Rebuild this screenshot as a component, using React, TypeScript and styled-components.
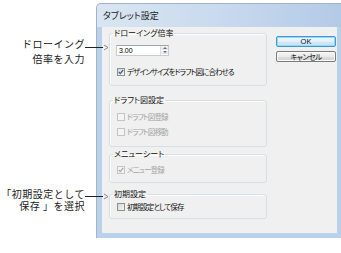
import React from 'react';
import styled, { createGlobalStyle } from 'styled-components';

const GlobalStyle = createGlobalStyle`
  html, body { margin: 0; padding: 0; background: #ffffff; }
  body { font-family: "Noto Sans CJK JP", "Noto Sans", sans-serif; }
  * { box-sizing: border-box; }
`;

const Page = styled.div`
  display: flex;
  width: 341px;
  height: 253px;
  overflow: hidden;
  background: #ffffff;
`;

const Side = styled.div`
  flex: 0 0 96px;
  position: relative;
  z-index: 2;
  padding-top: 36px;
  display: flex;
  flex-direction: column;
`;

const Annotation = styled.div<{ $mt: number }>`
  display: flex;
  justify-content: flex-end;
  align-items: flex-start;
  margin-top: ${(p) => p.$mt}px;
  margin-right: -13px;
  font-size: 10px;
  letter-spacing: 0.5px;
  color: #1a1a1a;
`;

const AnnText = styled.div<{ $gap: number }>`
  display: flex;
  flex-direction: column;
  align-items: flex-end;
  gap: ${(p) => p.$gap}px;
  white-space: nowrap;
`;

const AnnLine = styled.span`
  display: block;
  height: 11px;
  line-height: 11px;
`;

const ArrowSvg = styled.svg`
  flex: none;
  display: block;
`;

const Arrow = ({ y }: { y: number }) => (
  <ArrowSvg width="24" height="24" viewBox="0 0 24 24">
    <line x1="0" y1={y + 0.5} x2="18" y2={y + 0.5} stroke="#222" strokeWidth="1" />
    <polyline points={`19,${y - 2} 23,${y + 0.5} 19,${y + 3}`} fill="none" stroke="#8a8a8a" strokeWidth="1" />
  </ArrowSvg>
);

const Window = styled.div`
  flex: none;
  width: 245px;
  height: 235px;
  margin-top: 3px;
  border-top: 1px solid #a3b2c4;
  border-left: 1px solid #a3b2c4;
  border-top-left-radius: 5px;
  background: #b9d1ea;
  display: flex;
  flex-direction: column;
  padding: 0 4px 5px 5px;
`;

const TitleBar = styled.div`
  height: 23px;
  margin: 0 -4px 0 -5px;
  padding-left: 6px;
  display: flex;
  align-items: center;
  font-size: 9px;
  color: #1c1c1c;
  font-feature-settings: "palt";
  background: linear-gradient(to right, #d9e5f2 0%, #c9daee 50%, #b3cae6 100%);
  border-top-left-radius: 4px;
`;

const Client = styled.div`
  flex: 1;
  background: #f0f0f0;
  display: flex;
  gap: 9px;
  padding: 1px 0 0 7px;
`;

const GroupsColumn = styled.div`
  width: 158px;
  display: flex;
  flex-direction: column;
`;

const Group = styled.fieldset<{ $mt: number }>`
  margin: ${(p) => p.$mt}px 0 0 0;
  padding: 0;
  min-width: 0;
  border: 1px solid #d5dfe5;
  border-radius: 3px;
  box-shadow: inset 1px 1px 0 #ffffff;
`;

const Legend = styled.legend`
  margin-left: 3px;
  padding: 0 1px;
  font-size: 8px;
  line-height: 10px;
  color: #111;
  font-feature-settings: "palt";
`;

const GroupBody = styled.div<{ $pt: number; $pb: number; $gap: number }>`
  display: flex;
  flex-direction: column;
  gap: ${(p) => p.$gap}px;
  padding: ${(p) => p.$pt}px 0 ${(p) => p.$pb}px 6px;
`;

const SpinBox = styled.div`
  width: 53px;
  height: 11px;
  display: flex;
  border: 1px solid #c5ccd4;
  border-top-color: #9ea6b0;
  background: #ffffff;
`;

const SpinValue = styled.div`
  flex: 1;
  font-size: 7px;
  line-height: 9px;
  padding-left: 2px;
  color: #000;
  font-family: "Liberation Sans", sans-serif;
`;

const Spinner = styled.div`
  width: 8px;
  display: flex;
  flex-direction: column;
  border-left: 1px solid #d8dde3;
`;

const SpinHalf = styled.div`
  flex: 1;
  display: flex;
  align-items: center;
  justify-content: center;
  background: linear-gradient(#f6f6f6, #e2e2e2);
  border-bottom: 1px solid #ffffff;
`;

const Tri = styled.svg`
  display: block;
`;

const CheckRow = styled.div<{ $disabled?: boolean }>`
  height: 13px;
  display: flex;
  align-items: center;
  gap: 2px;
  padding-left: 1px;
  font-size: 7.5px;
  letter-spacing: -0.9px;
  line-height: 13px;
  color: ${(p) => (p.$disabled ? '#a4a4a4' : '#111')};
  font-feature-settings: "palt";
  white-space: nowrap;
`;

const Box = styled.div<{ $disabled?: boolean }>`
  width: 8px;
  height: 8px;
  flex: none;
  display: flex;
  align-items: center;
  justify-content: center;
  border: 1px solid ${(p) => (p.$disabled ? '#c4c4c4' : '#8e8f8f')};
  background: ${(p) => (p.$disabled ? '#f4f4f4' : 'linear-gradient(135deg, #d8d8d8, #f4f4f4)')};
`;

const Check = ({ color }: { color: string }) => (
  <svg width="6" height="6" viewBox="0 0 6 6">
    <polyline points="0.8,3 2.3,4.6 5.2,1" fill="none" stroke={color} strokeWidth="1.2" />
  </svg>
);

const CheckBox = ({ checked, disabled, label }: { checked?: boolean; disabled?: boolean; label: string }) => (
  <CheckRow $disabled={disabled}>
    <Box $disabled={disabled}>{checked && <Check color={disabled ? '#a8a8a8' : '#3e5a96'} />}</Box>
    <span>{label}</span>
  </CheckRow>
);

const ButtonsColumn = styled.div`
  width: 60px;
  display: flex;
  flex-direction: column;
  gap: 4px;
  padding-top: 8px;
`;

const Button = styled.div<{ $default?: boolean }>`
  height: 11px;
  display: flex;
  align-items: center;
  justify-content: center;
  font-size: 7.5px;
  line-height: 9px;
  color: #111;
  font-feature-settings: "palt";
  border-radius: 2px;
  border: 1px solid ${(p) => (p.$default ? '#3c9ad8' : '#7b7b7b')};
  background: ${(p) =>
    p.$default
      ? 'linear-gradient(#eef7fd 0%, #e1f1fb 50%, #cfe8f8 51%, #c4e3f7 100%)'
      : 'linear-gradient(#f4f4f4 0%, #ebebeb 50%, #dddddd 51%, #d2d2d2 100%)'};
  box-shadow: ${(p) => (p.$default ? 'inset 0 0 0 1px #9bd4f5' : 'inset 0 0 0 1px #f8f8f8')};
`;

const ButtonLabel = styled.span<{ $latin?: boolean }>`
  font-family: ${(p) => (p.$latin ? '"Liberation Sans", sans-serif' : 'inherit')};
  letter-spacing: ${(p) => (p.$latin ? '0' : '-0.5px')};
`;

export default function App() {
  return (
    <>
      <GlobalStyle />
      <Page>
        <Side>
          <Annotation $mt={2}>
            <AnnText $gap={4}>
              <AnnLine>ドローイング</AnnLine>
              <AnnLine>倍率を入力</AnnLine>
            </AnnText>
            <Arrow y={9} />
          </Annotation>
          <Annotation $mt={124}>
            <AnnText $gap={1}>
              <AnnLine>「初期設定として</AnnLine>
              <AnnLine>保存 」を選択</AnnLine>
            </AnnText>
            <Arrow y={8} />
          </Annotation>
        </Side>
        <Window>
          <TitleBar>タブレット設定</TitleBar>
          <Client>
            <GroupsColumn>
              <Group $mt={0}>
                <Legend>ドローイング倍率</Legend>
                <GroupBody $pt={7} $pb={7} $gap={9}>
                  <SpinBox>
                    <SpinValue>3.00</SpinValue>
                    <Spinner>
                      <SpinHalf>
                        <Tri width="4" height="2" viewBox="0 0 4 2">
                          <polygon points="0,2 2,0 4,2" fill="#5a6a7a" />
                        </Tri>
                      </SpinHalf>
                      <SpinHalf>
                        <Tri width="4" height="2" viewBox="0 0 4 2">
                          <polygon points="0,0 4,0 2,2" fill="#5a6a7a" />
                        </Tri>
                      </SpinHalf>
                    </Spinner>
                  </SpinBox>
                  <CheckBox checked label="デザインサイズをドラフト図に合わせる" />
                </GroupBody>
              </Group>
              <Group $mt={9}>
                <Legend>ドラフト図設定</Legend>
                <GroupBody $pt={5} $pb={8} $gap={2}>
                  <CheckBox disabled label="ドラフト図登録" />
                  <CheckBox disabled label="ドラフト図移動" />
                </GroupBody>
              </Group>
              <Group $mt={2}>
                <Legend>メニューシート</Legend>
                <GroupBody $pt={4} $pb={6} $gap={0}>
                  <CheckBox checked disabled label="メニュー登録" />
                </GroupBody>
              </Group>
              <Group $mt={6}>
                <Legend>初期設定</Legend>
                <GroupBody $pt={1} $pb={5} $gap={0}>
                  <CheckBox label="初期設定として保存" />
                </GroupBody>
              </Group>
            </GroupsColumn>
            <ButtonsColumn>
              <Button $default>
                <ButtonLabel $latin>OK</ButtonLabel>
              </Button>
              <Button>
                <ButtonLabel>キャンセル</ButtonLabel>
              </Button>
            </ButtonsColumn>
          </Client>
        </Window>
      </Page>
    </>
  );
}
